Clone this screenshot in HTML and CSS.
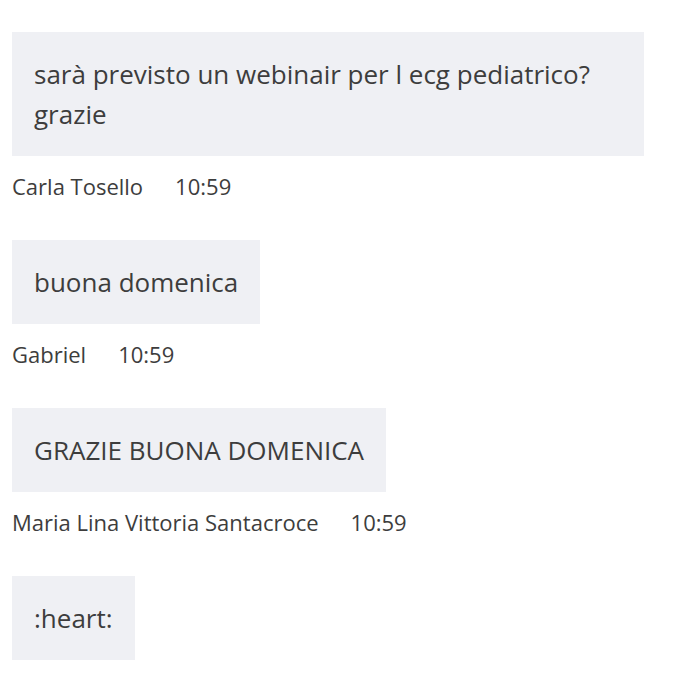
FILE: index.html
```html
<!DOCTYPE html>
<html lang="it">
<head>
<meta charset="utf-8">
<link rel="stylesheet" href="styles.css">
</head>
<body>
<div class="chat">
  <div class="msg">
    <div class="bubble">sarà previsto un webinair per l ecg pediatrico? grazie</div>
    <div class="meta"><span class="name">Carla Tosello</span><span class="time">10:59</span></div>
  </div>
  <div class="msg">
    <div class="bubble">buona domenica</div>
    <div class="meta"><span class="name">Gabriel</span><span class="time">10:59</span></div>
  </div>
  <div class="msg">
    <div class="bubble">GRAZIE BUONA DOMENICA</div>
    <div class="meta"><span class="name">Maria Lina Vittoria Santacroce</span><span class="time">10:59</span></div>
  </div>
  <div class="msg">
    <div class="bubble">:heart:</div>
  </div>
</div>
</body>
</html>
```
FILE: styles.css
```css
html, body {
  margin: 0;
  padding: 0;
  background: #ffffff;
}
body {
  font-family: "Open Sans", "Liberation Sans", sans-serif;
  color: #3d3d3d;
}
.chat {
  padding: 32px 12px 0 12px;
  display: flex;
  flex-direction: column;
  gap: 40px;
}
.msg {
  display: flex;
  flex-direction: column;
  align-items: flex-start;
}
.bubble {
  background: #eff0f4;
  padding: 22px 22px;
  max-width: 588px;
  font-size: 26px;
  line-height: 40px;
}
.meta {
  margin-top: 16px;
  font-size: 22px;
  line-height: 28px;
  color: #3d3d3d;
  display: flex;
  gap: 32px;
}
```
